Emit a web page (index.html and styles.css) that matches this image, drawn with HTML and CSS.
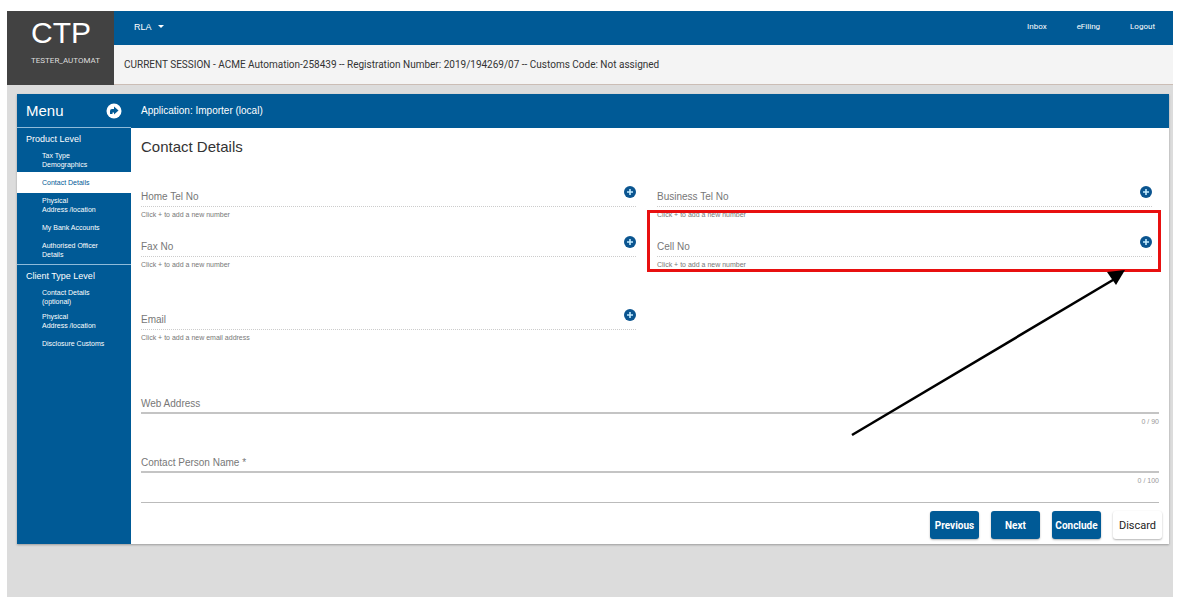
FILE: index.html
```html
<!DOCTYPE html>
<html lang="en">
<head>
    <meta charset="UTF-8">
    <meta name="viewport" content="width=device-width, initial-scale=1.0">
    <title>Contact Details</title>
    <link rel="stylesheet" href="styles.css">
</head>
<body>
    <svg class="sprite" aria-hidden="true">
        <symbol id="plus" viewBox="0 0 12 12">
            <circle cx="6" cy="6" r="6" fill="#0b5590"/>
            <path d="M6 3v6M3 6h6" stroke="#c4ecff" stroke-width="1.6"/>
        </symbol>
    </svg>

    <div class="page">
        <header class="header">
            <div class="brand">
                <div class="brand-name">CTP</div>
                <div class="brand-user">TESTER_AUTOMAT</div>
            </div>
            <div class="header-main">
                <nav class="navbar">
                    <button type="button" class="dropdown">RLA <span class="caret"></span></button>
                    <div class="nav-links">
                        <a href="#">Inbox</a>
                        <a href="#">eFiling</a>
                        <a href="#">Logout</a>
                    </div>
                </nav>
                <div class="session">CURRENT SESSION - ACME Automation-258439 -- Registration Number: 2019/194269/07 -- Customs Code: Not assigned</div>
            </div>
        </header>

        <main class="card">
            <aside class="sidebar">
                <div class="menu-header">
                    <span>Menu</span>
                    <button type="button" class="menu-toggle" aria-label="Collapse menu">
                        <svg viewBox="0 0 16 16" width="16" height="16">
                            <circle cx="8" cy="8" r="7.5" fill="#fff"/>
                            <path d="M4 11V8Q4 6 6 6H8V3.5L12.5 7.5L8 11.5V9.5H6.5V11Z" fill="#005a96"/>
                        </svg>
                    </button>
                </div>
                <nav class="level">
                    <h3>Product Level</h3>
                    <a href="#" class="double">Tax Type<br>Demographics</a>
                    <a href="#" class="active">Contact Details</a>
                    <a href="#" class="double">Physical<br>Address /location</a>
                    <a href="#">My Bank Accounts</a>
                    <a href="#" class="double">Authorised Officer<br>Details</a>
                </nav>
                <nav class="level">
                    <h3>Client Type Level</h3>
                    <a href="#" class="double">Contact Details<br>(optional)</a>
                    <a href="#" class="double">Physical<br>Address /location</a>
                    <a href="#">Disclosure Customs</a>
                </nav>
            </aside>

            <section class="content">
                <div class="title-bar">Application: Importer (local)</div>
                <form class="form">
                    <h2>Contact Details</h2>

                    <div class="fields">
                        <div class="field">
                            <div class="field-row">
                                <span>Home Tel No</span>
                                <button type="button" aria-label="Add home tel no"><svg><use href="#plus"/></svg></button>
                            </div>
                            <p class="hint">Click + to add a new number</p>
                        </div>
                        <div class="field">
                            <div class="field-row">
                                <span>Business Tel No</span>
                                <button type="button" aria-label="Add business tel no"><svg><use href="#plus"/></svg></button>
                            </div>
                            <p class="hint">Click + to add a new number</p>
                        </div>
                        <div class="field">
                            <div class="field-row">
                                <span>Fax No</span>
                                <button type="button" aria-label="Add fax no"><svg><use href="#plus"/></svg></button>
                            </div>
                            <p class="hint">Click + to add a new number</p>
                        </div>
                        <div class="field">
                            <div class="field-row">
                                <span>Cell No</span>
                                <button type="button" aria-label="Add cell no"><svg><use href="#plus"/></svg></button>
                            </div>
                            <p class="hint">Click + to add a new number</p>
                            <div class="highlight"></div>
                            <svg class="arrow" viewBox="0 0 280 170">
                                <path d="M2 165L268 7" stroke="#000" stroke-width="2.6"/>
                                <path d="M257 2L275 0L266 15Z" fill="#000"/>
                            </svg>
                        </div>
                        <div class="field email">
                            <div class="field-row">
                                <span>Email</span>
                                <button type="button" aria-label="Add email"><svg><use href="#plus"/></svg></button>
                            </div>
                            <p class="hint">Click + to add a new email address</p>
                        </div>
                    </div>

                    <div class="text-field">
                        <div class="text-row">
                            <label for="webAddress">Web Address</label>
                            <input type="text" id="webAddress" maxlength="90">
                        </div>
                        <div class="counter">0 / 90</div>
                    </div>
                    <div class="text-field">
                        <div class="text-row">
                            <label for="contactPerson">Contact Person Name *</label>
                            <input type="text" id="contactPerson" maxlength="100" required>
                        </div>
                        <div class="counter">0 / 100</div>
                    </div>
                </form>
                <hr>
                <div class="actions">
                    <button type="button" class="btn">Previous</button>
                    <button type="button" class="btn">Next</button>
                    <button type="button" class="btn">Conclude</button>
                    <button type="button" class="btn btn-light">Discard</button>
                </div>
            </section>
        </main>
    </div>
</body>
</html>
```
FILE: styles.css
```css
* {
    box-sizing: border-box;
}
body {
    margin: 0;
    padding: 11px 8px 7px 7px;
    background-color: #fff;
    color: #333;
    font-family: "Liberation Sans", Arial, sans-serif;
    font-size: 10px;
}
h2, h3, p {
    margin: 0;
    font-weight: normal;
}
a {
    color: inherit;
    text-decoration: none;
}
button {
    padding: 0;
    border: none;
    background: none;
    color: inherit;
    font-family: inherit;
    cursor: pointer;
}
.sprite {
    position: absolute;
    width: 0;
    height: 0;
}
.page {
    min-height: calc(100vh - 18px);
    background-color: #dcdcdc;
}

/* Header */
.header {
    display: flex;
}
.brand {
    width: 107px;
    padding: 6px 0 0 24px;
    background-color: #424242;
    color: #fff;
}
.brand-name {
    font-size: 30px;
    line-height: 32px;
}
.brand-user {
    margin-top: 6px;
    color: #ddd;
    font-family: Roboto, sans-serif;
    font-size: 8px;
    line-height: 12px;
}
.header-main {
    flex: 1;
}
.navbar {
    display: flex;
    align-items: center;
    justify-content: space-between;
    height: 34px;
    padding: 0 18px 3px 20px;
    background-color: #005a96;
    color: #fff;
}
.dropdown {
    display: flex;
    align-items: center;
    gap: 6px;
    font-size: 9px;
}
.caret {
    border: 3px solid transparent;
    border-top-color: #fff;
    border-bottom: none;
}
.nav-links {
    display: flex;
    gap: 30px;
    font-family: Roboto, sans-serif;
    font-size: 8px;
}
.session {
    height: 40px;
    padding-left: 10px;
    border-bottom: 1px solid #cbbdb5;
    background-color: #f4f4f4;
    font-family: Roboto, sans-serif;
    font-size: 10px;
    line-height: 39px;
}

/* Card */
.card {
    display: flex;
    margin: 9px 4px 0 10px;
    min-height: 450px;
    background-color: #fff;
    box-shadow: 0 1px 2px rgba(0, 0, 0, 0.3);
}
.sidebar {
    width: 114px;
    background-color: #005a96;
    color: #fff;
}
.menu-header {
    display: flex;
    align-items: center;
    justify-content: space-between;
    height: 33px;
    padding: 0 9px;
    font-size: 15px;
}
.menu-toggle {
    display: flex;
}
.level {
    padding-bottom: 2px;
    border-top: 1px solid #8fbbd9;
}
.level h3 {
    padding: 5px 9px 3px;
    font-size: 9px;
    line-height: 12px;
}
.level a {
    display: block;
    padding: 6px 0 6px 25px;
    font-size: 7px;
    line-height: 9px;
}
.level a.double {
    padding-top: 3px;
    padding-bottom: 3px;
}
.level a.active {
    background-color: #fff;
    color: #005a96;
}
.content {
    flex: 1;
}
.title-bar {
    height: 34px;
    padding-left: 10px;
    background-color: #005a96;
    color: #fff;
    font-size: 10px;
    line-height: 34px;
}

/* Form */
.form {
    padding: 9px 10px 0;
}
.form h2 {
    font-size: 15px;
    line-height: 20px;
}
.fields {
    display: grid;
    grid-template-columns: 1fr 1fr;
    column-gap: 21px;
    margin: 27px 7px 0 0;
    color: #777;
}
.field {
    position: relative;
    height: 50px;
}
.field.email {
    margin-top: 23px;
}
.field-row {
    display: flex;
    justify-content: space-between;
    height: 23px;
    border-bottom: 1px dotted #ccc;
    line-height: 26px;
}
.field-row button {
    display: flex;
    align-self: flex-start;
    padding-top: 2px;
}
.field-row svg {
    width: 12px;
    height: 12px;
}
.hint, .counter {
    font-size: 7px;
    line-height: 16px;
}
.highlight {
    position: absolute;
    top: -24px;
    right: -9px;
    left: -10px;
    height: 62px;
    border: 3px solid #e81010;
}
.arrow {
    position: absolute;
    top: 36px;
    right: 22px;
    width: 280px;
    height: 170px;
    pointer-events: none;
}
.text-field {
    height: 59px;
    color: #777;
}
.text-field:last-child {
    height: 47px;
}
.fields + .text-field {
    margin-top: 39px;
}
.text-row {
    display: flex;
    height: 18px;
    border-bottom: 2px solid #c4c4c4;
    line-height: 16px;
}
.text-row input {
    flex: 1;
    min-width: 0;
    border: none;
    outline: none;
    background: none;
    font-size: 10px;
}
.counter {
    color: #999;
    text-align: right;
}
hr {
    margin: 0 10px;
    border: none;
    border-top: 1px solid #bbb;
}
.actions {
    display: flex;
    justify-content: flex-end;
    gap: 12px;
    padding: 8px 7px 0 0;
}
.btn {
    width: 49px;
    height: 28px;
    border-radius: 3px;
    background-color: #005a96;
    box-shadow: 0 1px 2px rgba(0, 0, 0, 0.3);
    color: #fff;
    font-family: Roboto, sans-serif;
    font-size: 10px;
    font-weight: bold;
}
.btn-light {
    background-color: #fff;
    color: #222;
    font-size: 11px;
    font-weight: normal;
}
```
